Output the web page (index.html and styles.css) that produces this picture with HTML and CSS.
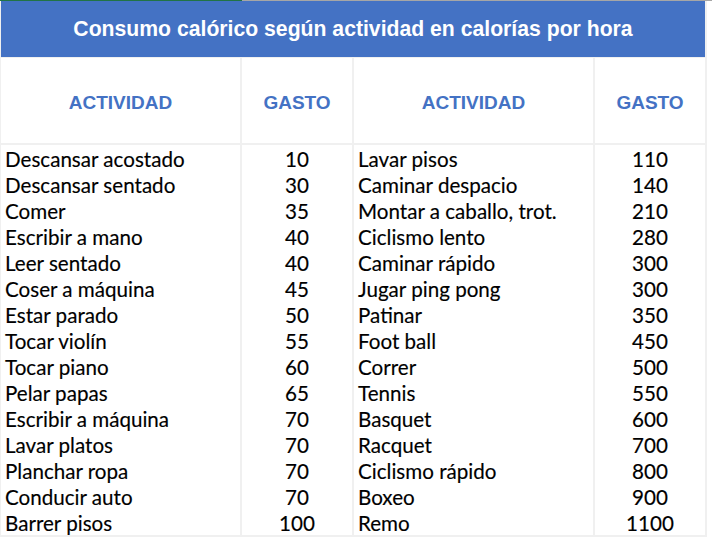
FILE: index.html
```html
<!DOCTYPE html>
<html lang="es">
<head>
<meta charset="utf-8">
<title>Consumo calórico</title>
<link rel="stylesheet" href="styles.css">
</head>
<body>
<div class="topline"><span class="sel"></span><span class="rest"></span></div>
<div class="sheet">
  <div class="title">Consumo calórico según actividad en calorías por hora</div>
  <div class="hd">ACTIVIDAD</div><div class="hd">GASTO</div><div class="hd">ACTIVIDAD</div><div class="hd">GASTO</div>

  <div class="c">Descansar acostado</div><div class="n">10</div><div class="c">Lavar pisos</div><div class="n">110</div>
  <div class="c">Descansar sentado</div><div class="n">30</div><div class="c">Caminar despacio</div><div class="n">140</div>
  <div class="c">Comer</div><div class="n">35</div><div class="c">Montar a caballo, trot.</div><div class="n">210</div>
  <div class="c">Escribir a mano</div><div class="n">40</div><div class="c">Ciclismo lento</div><div class="n">280</div>
  <div class="c">Leer sentado</div><div class="n">40</div><div class="c">Caminar rápido</div><div class="n">300</div>
  <div class="c">Coser a máquina</div><div class="n">45</div><div class="c">Jugar ping pong</div><div class="n">300</div>
  <div class="c">Estar parado</div><div class="n">50</div><div class="c">Patinar</div><div class="n">350</div>
  <div class="c">Tocar violín</div><div class="n">55</div><div class="c">Foot ball</div><div class="n">450</div>
  <div class="c">Tocar piano</div><div class="n">60</div><div class="c">Correr</div><div class="n">500</div>
  <div class="c">Pelar papas</div><div class="n">65</div><div class="c">Tennis</div><div class="n">550</div>
  <div class="c">Escribir a máquina</div><div class="n">70</div><div class="c">Basquet</div><div class="n">600</div>
  <div class="c">Lavar platos</div><div class="n">70</div><div class="c">Racquet</div><div class="n">700</div>
  <div class="c">Planchar ropa</div><div class="n">70</div><div class="c">Ciclismo rápido</div><div class="n">800</div>
  <div class="c">Conducir auto</div><div class="n">70</div><div class="c">Boxeo</div><div class="n">900</div>
  <div class="c last">Barrer pisos</div><div class="n last">100</div><div class="c last">Remo</div><div class="n last">1100</div>
</div>
</body>
</html>
```
FILE: styles.css
```css
html, body {
  margin: 0;
  padding: 0;
  background: #ffffff;
}

.topline {
  display: flex;
  height: 1px;
}
.topline .sel {
  width: 242px;
  background: #217346;
}
.topline .rest {
  flex: 1;
  background: #a6a6a6;
}

.sheet {
  display: grid;
  grid-template-columns: 239px 110px 239px 110px;
  column-gap: 2px;
  padding: 0 2px 0 1px;
  background: #f0f0f0;
  box-sizing: border-box;
  width: 707px;
}

.title {
  grid-column: 1 / -1;
  height: 57px;
  box-sizing: border-box;
  background: #4472c4;
  color: #ffffff;
  font-family: "Liberation Sans", Arial, sans-serif;
  font-weight: bold;
  font-size: 21.2px;
  display: flex;
  align-items: center;
  justify-content: center;
  border-bottom: 1px solid #f0f0f0;
}

.hd {
  height: 87px;
  box-sizing: border-box;
  background: #ffffff;
  border-bottom: 2px solid #f0f0f0;
  color: #4472c4;
  font-family: "Liberation Sans", Arial, sans-serif;
  font-weight: bold;
  font-size: 19px;
  display: flex;
  align-items: center;
  justify-content: center;
  padding-top: 5px;
}

.c, .n {
  background: #ffffff;
  height: 26px;
  line-height: 24px;
  padding-top: 2px;
  font-family: Lato, "Liberation Sans", sans-serif;
  font-size: 20.6px;
  color: #000000;
  white-space: nowrap;
  box-sizing: border-box;
  -webkit-text-stroke: 0.15px #000;
}
.c {
  padding-left: 4px;
}
.n {
  text-align: center;
}
.last {
  height: 28px;
  border-bottom: 2px solid #f0f0f0;
}
```
